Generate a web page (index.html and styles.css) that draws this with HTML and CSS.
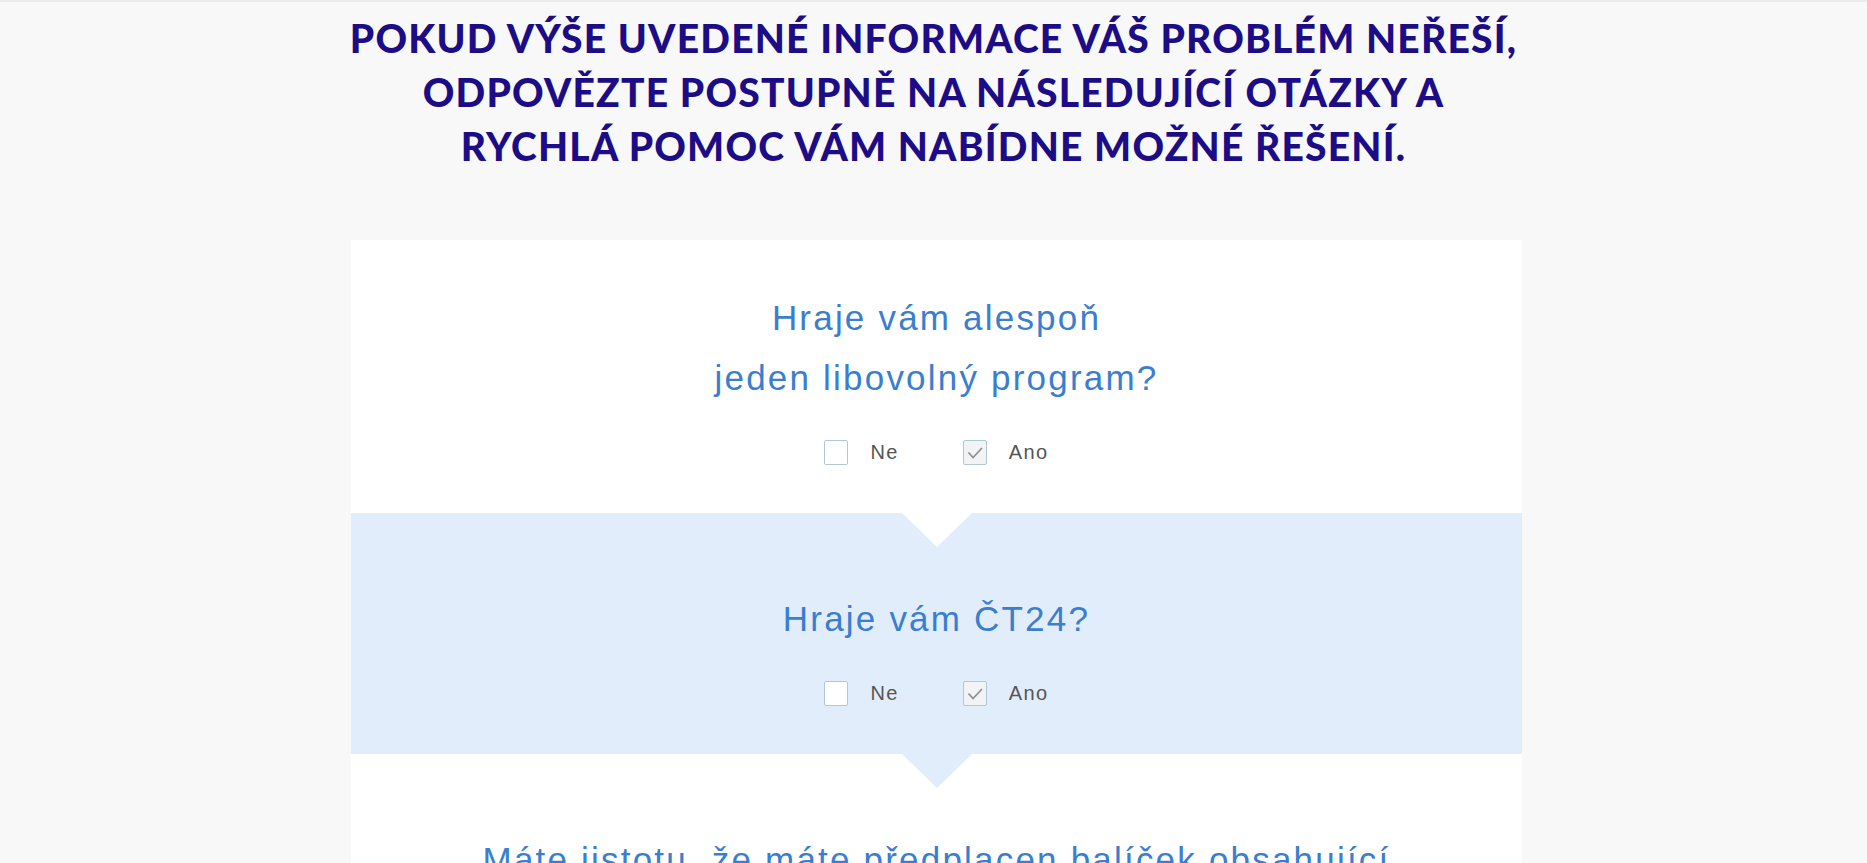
FILE: index.html
```html
<!DOCTYPE html>
<html lang="cs">
<head>
<meta charset="utf-8">
<title>Rychlá pomoc</title>
<link rel="stylesheet" href="styles.css">
</head>
<body>
<div class="topline"></div>
<h1 class="heading">POKUD VÝŠE UVEDENÉ INFORMACE VÁŠ PROBLÉM NEŘEŠÍ,<br>ODPOVĚZTE POSTUPNĚ NA NÁSLEDUJÍCÍ OTÁZKY A<br>RYCHLÁ POMOC VÁM NABÍDNE MOŽNÉ ŘEŠENÍ.</h1>
<main class="card">
  <section class="step step-white step-first">
    <h2 class="question">Hraje vám alespoň<br>jeden libovolný program?</h2>
    <div class="answers">
      <label class="answer"><span class="box"></span><span class="label">Ne</span></label>
      <label class="answer"><span class="box checked"><svg viewBox="0 0 24 24" width="24" height="24"><path d="M5.5 11.5 L10 16.5 L19 7" fill="none" stroke="#8f8f8f" stroke-width="1.7"/></svg></span><span class="label">Ano</span></label>
    </div>
  </section>
  <section class="step step-blue">
    <span class="arrow arrow-white"></span>
    <h2 class="question">Hraje vám ČT24?</h2>
    <div class="answers">
      <label class="answer"><span class="box"></span><span class="label">Ne</span></label>
      <label class="answer"><span class="box checked"><svg viewBox="0 0 24 24" width="24" height="24"><path d="M5.5 11.5 L10 16.5 L19 7" fill="none" stroke="#8f8f8f" stroke-width="1.7"/></svg></span><span class="label">Ano</span></label>
    </div>
  </section>
  <section class="step step-white">
    <span class="arrow arrow-blue"></span>
    <h2 class="question">Máte jistotu, že máte předplacen balíček obsahující</h2>
  </section>
</main>
</body>
</html>
```

FILE: styles.css
```css
html, body {
  margin: 0;
  padding: 0;
}
body {
  background: #f8f8f8;
  font-family: "Liberation Sans", Arial, sans-serif;
  overflow: hidden;
}
.topline {
  height: 2px;
  background: #ececec;
}
.heading {
  margin: 9px 0 0 0;
  text-align: center;
  font-family: "Lato", sans-serif;
  font-weight: 900;
  font-size: 39px;
  line-height: 54px;
  color: #1c0d86;
  letter-spacing: 1.2px;
}
.card {
  width: 1171px;
  margin: 67px auto 0 auto;
  position: relative;
  left: 3px;
}
.step {
  position: relative;
  display: flex;
  flex-direction: column;
  align-items: center;
  padding: 76px 0 48px 0;
}
.step-first {
  padding-top: 48px;
}
.step-white {
  background: #ffffff;
}
.step-blue {
  background: #e1edfb;
}
.arrow {
  position: absolute;
  top: 0;
  left: 50%;
  width: 0;
  height: 0;
  margin-left: -35px;
  border-left: 35px solid transparent;
  border-right: 35px solid transparent;
  border-top: 34px solid #ffffff;
}
.arrow-blue {
  border-top-color: #e1edfb;
}
.question {
  margin: 0;
  font-weight: normal;
  font-size: 35px;
  line-height: 60px;
  letter-spacing: 2.2px;
  color: #3a7ed0;
  text-align: center;
}
.answers {
  display: flex;
  gap: 64px;
  margin-top: 32px;
}
.answer {
  display: flex;
  align-items: center;
  gap: 22px;
}
.box {
  width: 22px;
  height: 23px;
  border: 1px solid #b2c7d5;
  border-radius: 2px;
  background: #ffffff;
  display: flex;
  align-items: center;
  justify-content: center;
}
.box svg {
  display: block;
  flex: none;
}
.box.checked {
  background: #f2f3f4;
}
.label {
  font-size: 20px;
  letter-spacing: 1.4px;
  color: #555555;
  line-height: 25px;
}
```
